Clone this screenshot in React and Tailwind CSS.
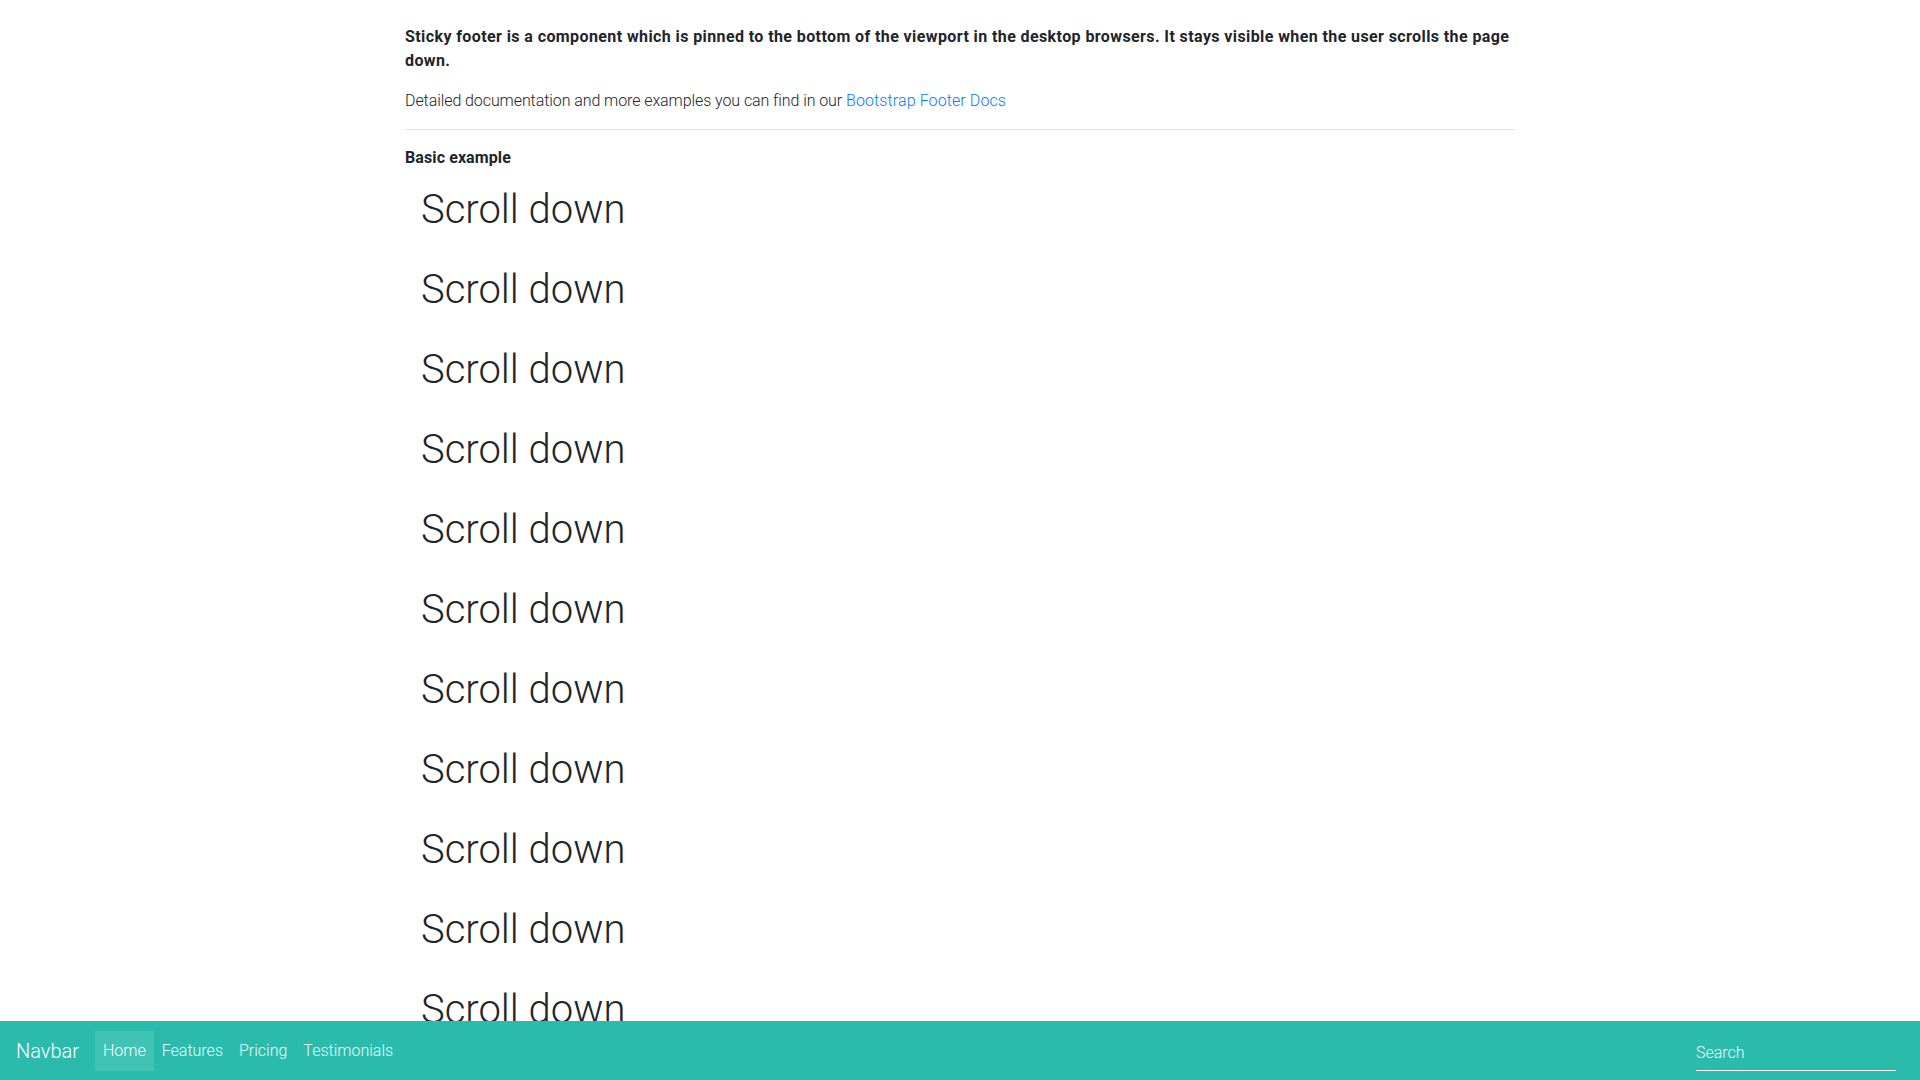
import React from "react";

const lines = Array.from({ length: 14 });

function StickyFooter() {
  return (
    <footer className="fixed bottom-0 left-0 right-0 h-[59px] bg-[#2bbbad] flex items-center px-4 text-white font-light">
      <a className="text-[20px] leading-[30px] mr-4 text-white">Navbar</a>
      <ul className="flex items-center text-[16px]">
        <li className="h-10 px-2 flex items-center bg-white/10">Home</li>
        <li className="h-10 px-2 flex items-center text-white/90">Features</li>
        <li className="h-10 px-2 flex items-center text-white/90">Pricing</li>
        <li className="h-10 px-2 flex items-center text-white/90">Testimonials</li>
      </ul>
      <div className="ml-auto mr-2 w-[200px] h-10 flex items-end">
        <input
          placeholder="Search"
          className="w-full h-9 bg-transparent border-b border-white text-[16px] font-light text-white placeholder:text-white/90 outline-none"
        />
      </div>
    </footer>
  );
}

export default function App() {
  return (
    <div
      className="h-screen overflow-hidden bg-white text-[#212529]"
      style={{ fontFamily: "Roboto, 'Liberation Sans', sans-serif" }}
    >
      <div className="w-[1140px] mx-auto px-[15px] pt-[25px]">
        <p className="font-bold text-[16px] leading-6 mb-4 tracking-[0.4px]">
          Sticky footer is a component which is pinned to the bottom of the viewport in the desktop browsers. It stays visible when the user scrolls the page down.
        </p>
        <p className="font-light text-[16px] leading-6 mb-4">
          <span className="tracking-[-0.08px]">Detailed documentation and more examples you can find in our</span>{" "}
          <a className="text-[#007bff] tracking-[0.1px]">Bootstrap Footer Docs</a>
        </p>
        <hr className="my-4 border-t border-black/10" />
        <p className="font-bold text-[16px] leading-6 mb-4 tracking-[0.1px]">Basic example</p>
        <div className="px-4">
          {lines.map((_, i) => (
            <h1 key={i} className="text-[40px] leading-[48px] font-light mb-8">
              Scroll down
            </h1>
          ))}
        </div>
      </div>
      <StickyFooter />
    </div>
  );
}
